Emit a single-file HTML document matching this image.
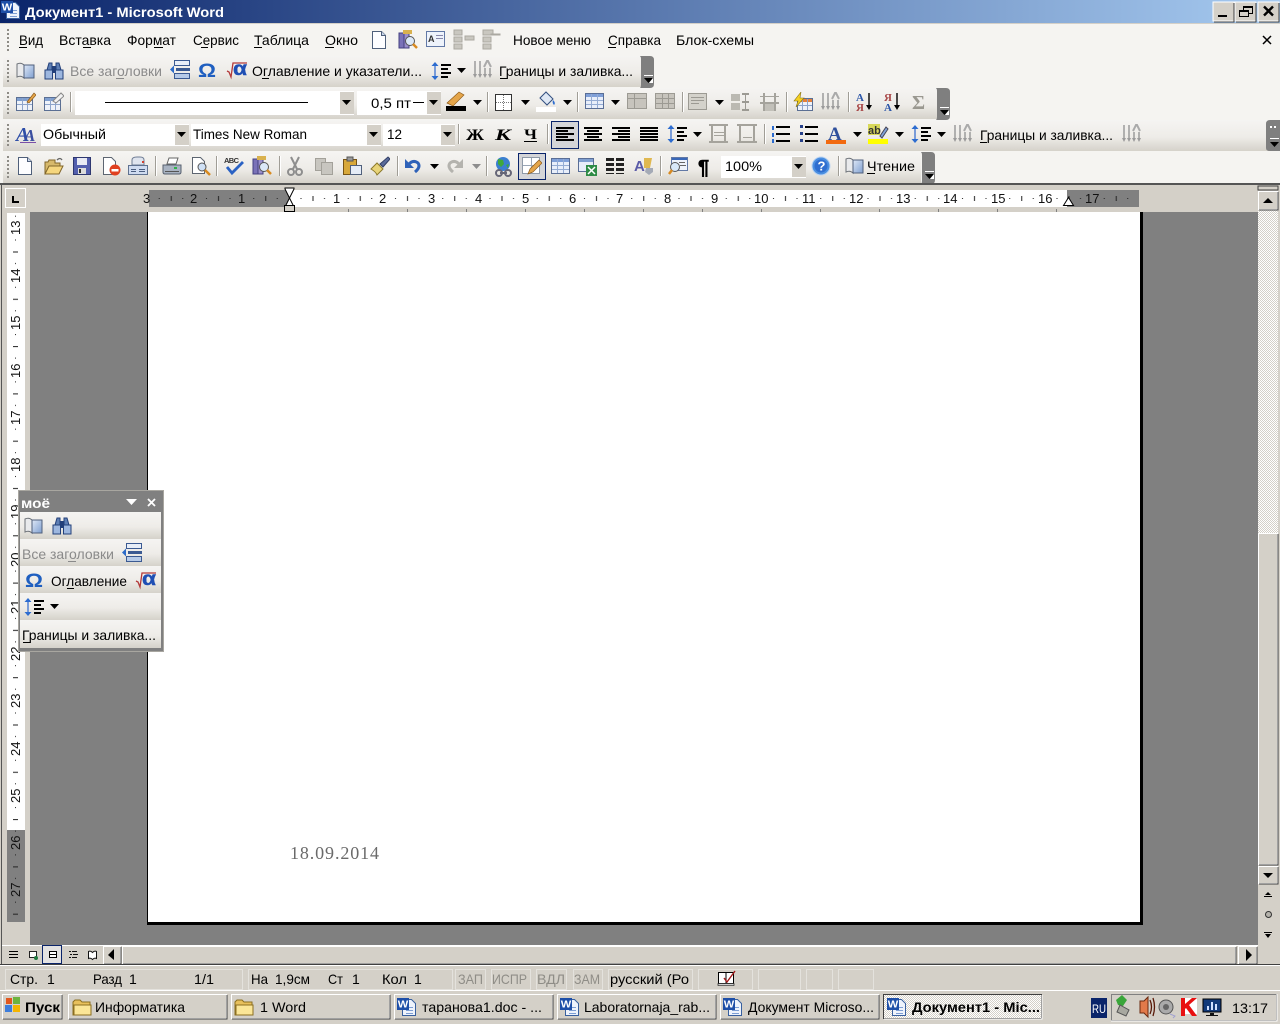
<!DOCTYPE html>
<html lang="ru"><head><meta charset="utf-8"><title>Документ1 - Microsoft Word</title>
<style>
html,body{margin:0;padding:0;background:#d4d0c8;width:1280px;height:1024px;overflow:hidden}
svg{display:block;position:absolute;left:0;top:0}
text{font-family:"Liberation Sans",sans-serif;font-size:14px;fill:#000}
.g{fill:#8a8a8a}
.b{font-weight:bold}
.r{font-size:13px;fill:#111}
rect.c,path.c{shape-rendering:crispEdges}
</style></head><body>
<svg width="1280" height="1024" viewBox="0 0 1280 1024" xmlns="http://www.w3.org/2000/svg">
<defs>
<linearGradient id="tb" x1="0" x2="1" y1="0" y2="0"><stop offset="0" stop-color="#0a246a"/><stop offset="1" stop-color="#a6caf0"/></linearGradient>
<linearGradient id="bd" x1="0" x2="0" y1="0" y2="1"><stop offset="0" stop-color="#f5f4f2"/><stop offset=".55" stop-color="#eeece8"/><stop offset="1" stop-color="#d5d2ca"/></linearGradient>
<linearGradient id="blu" x1="0" x2="1" y1="0" y2="1"><stop offset="0" stop-color="#dfe8f6"/><stop offset="1" stop-color="#7f9fd0"/></linearGradient>
<pattern id="dit" width="2" height="2" patternUnits="userSpaceOnUse"><rect width="2" height="2" fill="#fff"/><rect width="1" height="1" fill="#d4d0c8"/><rect x="1" y="1" width="1" height="1" fill="#d4d0c8"/></pattern>
<pattern id="rt" x="289" y="190" width="47.25" height="17" patternUnits="userSpaceOnUse"><rect x="11.5" y="8" width="1" height="1" fill="#222"/><rect x="23.5" y="6" width="1" height="5" fill="#222"/><rect x="35" y="8" width="1" height="1" fill="#222"/></pattern>
<pattern id="rv" x="0" y="228" width="30" height="47.3" patternUnits="userSpaceOnUse"><rect x="15" y="11.5" width="1" height="1" fill="#222"/><rect x="13" y="23.5" width="5" height="1" fill="#222"/><rect x="15" y="35" width="1" height="1" fill="#222"/></pattern>

<symbol id="dn" width="10" height="6" viewBox="0 0 10 6"><path d="M0 0h9L4.500 5z" fill="#000"/></symbol>
<symbol id="dg" width="10" height="6" viewBox="0 0 10 6"><path d="M0 0h9L4.500 5z" fill="#8d8d8d"/></symbol>
<symbol id="grip" width="4" height="24" viewBox="0 0 4 24"><path class="c" d="M1 0h2v2H1zM1 4h2v2H1zM1 8h2v2H1zM1 12h2v2H1zM1 16h2v2H1zM1 20h2v2H1z" fill="#8e8c86"/></symbol>
<symbol id="sep" width="2" height="20" viewBox="0 0 2 20"><path class="c" d="M0 0h1v20H0z" fill="#a09d96"/><path class="c" d="M1 0h1v20H1z" fill="#fff"/></symbol>
<symbol id="chev" width="15" height="32" viewBox="0 0 15 32"><path d="M0 0h10q4 0 4 4v24q0 4-4 4H0q1-1 1-3V3q0-2-1-3z" fill="#7f7f7f"/><path class="c" d="M4 19h9v1H4z" fill="#fff"/><path d="M4 22h9l-4.500 5z" fill="#000"/><path d="M9 27l4-5v5z" fill="#fff"/></symbol>
<symbol id="book" width="20" height="20" viewBox="0 0 20 20"><path d="M1 3q4-2 7 1v13q-3-3-7-1z" fill="#e9eaec" stroke="#6d7278"/><path d="M8 4h10v13H8z" fill="url(#blu)" stroke="#50607c"/></symbol>
<symbol id="bin" width="20" height="20" viewBox="0 0 20 20"><path d="M3 9l2-7h3v7M17 9l-2-7h-3v7" fill="#5e7fb5" stroke="#23407a"/><rect x="1" y="9" width="7.500" height="9" fill="#9db7df" stroke="#23407a"/><rect x="11.500" y="9" width="7.500" height="9" fill="#9db7df" stroke="#23407a"/><rect x="8" y="5" width="4" height="7" fill="#23407a"/></symbol>
<symbol id="head" width="20" height="20" viewBox="0 0 20 20"><rect x="4.500" y=".5" width="15" height="5" fill="#e8eef8" stroke="#3b5a92"/><rect x="4.500" y="13.500" width="15" height="5" fill="#b7cbe8" stroke="#3b5a92"/><path class="c" d="M6 8h14v3H6z" fill="#3b5a92"/><path d="M0 9.500l4-4v8z" fill="#2d6bc8"/></symbol>
<symbol id="sq" width="22" height="20" viewBox="0 0 22 20"><path d="M1 11l2 1 2 5 2-14h14" fill="none" stroke="#b33a3a" stroke-width="1.300"/><text x="7" y="15" style="font-size:19px;font-weight:bold;fill:#1f4fb4;stroke:#1f4fb4;stroke-width:.4" textLength="14" lengthAdjust="spacingAndGlyphs">α</text></symbol>
<symbol id="spc" width="20" height="20" viewBox="0 0 20 20"><path d="M4 1l3.500 4h-7zM4 19l3.500-4h-7z" fill="#2c6cd0"/><path d="M3 5h2v10H3z" fill="#7a9cd8"/><path class="c" d="M10 3h10v2H10zM10 7h7v2H10zM10 11h10v2H10zM10 15h7v2H10z" fill="#000"/></symbol>
<symbol id="bgr" width="20" height="20" viewBox="0 0 20 20"><path d="M2 1v14M7 1v14M12 8v7M17 8v7" stroke="#9b9b9b" stroke-width="1.500"/><path d="M0 14l2 4 2-4zM5 14l2 4 2-4zM10 14l2 4 2-4zM15 14l2 4 2-4z" fill="#9b9b9b"/><path d="M11 7l3.500-7 3.500 7" fill="none" stroke="#aaa" stroke-width="2"/></symbol>
<symbol id="tpen" width="20" height="20" viewBox="0 0 20 20"><rect x=".5" y="5.500" width="16" height="13" fill="#eef2f9" stroke="#5b6f93"/><path class="c" d="M1 6h15v3H1z" fill="#7f9fd0"/><path class="c" d="M6 6h1v12H6zM11 6h1v12h-1zM1 12h15v1H1z" fill="#8ea5cb"/><path d="M11 10L18 1l2 2-7 8z" fill="#e4a54a" stroke="#8e5b1a" stroke-width=".7"/></symbol>
<symbol id="terase" width="20" height="20" viewBox="0 0 20 20"><rect x=".5" y="5.500" width="16" height="13" fill="#eef2f9" stroke="#5b6f93"/><path class="c" d="M1 6h15v3H1z" fill="#7f9fd0"/><path class="c" d="M6 6h1v12H6zM11 6h1v12h-1zM1 12h15v1H1z" fill="#8ea5cb"/><path d="M9 9l8-8 3 3-8 7z" fill="#f2f2f2" stroke="#888"/></symbol>
<symbol id="new" width="20" height="20" viewBox="0 0 20 20"><path d="M3.500 1.500h9l4 4v13h-13z" fill="#fdfdff" stroke="#4f5f7a"/><path d="M12.500 1.500v4h4" fill="#c9d6ea" stroke="#4f5f7a"/></symbol>
<symbol id="open" width="20" height="20" viewBox="0 0 20 20"><path d="M1 18V6h3l1-2h6v3h5v3" fill="#d7b96b" stroke="#81662b"/><path d="M1 18l4-8h14l-4 8z" fill="#f5d67e" stroke="#81662b"/><path d="M13 4q3-3 5 0" fill="none" stroke="#666" stroke-width="1.300"/></symbol>
<symbol id="save" width="20" height="20" viewBox="0 0 20 20"><rect x="1.500" y="1.500" width="17" height="17" fill="#535fae" stroke="#2e3770"/><rect x="5" y="2" width="10" height="7" fill="#e8eaf4"/><rect x="6" y="12" width="8" height="6" fill="#ddd"/><rect x="7" y="13" width="2" height="4" fill="#333"/></symbol>
<symbol id="perm" width="20" height="20" viewBox="0 0 20 20"><path d="M2.500 1.500h8l4 4v13h-12z" fill="#fff" stroke="#5d6571"/><circle cx="14" cy="14" r="5.500" fill="#e04020"/><rect x="10.500" y="13" width="7" height="2.500" fill="#fff"/></symbol>
<symbol id="mail" width="20" height="20" viewBox="0 0 20 20"><path d="M4 9V4q0-3 5-3h3q4 0 4 3v5z" fill="#dfe4ee" stroke="#6e7c94"/><rect x="14" y="5" width="2" height="2" fill="#d04030"/><rect x=".5" y="9.500" width="19" height="9" fill="#cfdbf0" stroke="#5f7190"/><path class="c" d="M3 13h5v1H3zM3 15h5v1H3zM11 13h6v1h-6zM11 15h6v1h-6z" fill="#4b5e80"/></symbol>
<symbol id="print" width="20" height="20" viewBox="0 0 20 20"><path d="M5 8l2-6h9l-2 6z" fill="#fff" stroke="#666"/><path d="M1 9h18v7q0 2-2 2H3q-2 0-2-2z" fill="#a9b3c2" stroke="#57606f"/><rect x="12" y="11" width="3" height="2" fill="#2fb34a"/><path class="c" d="M3 15h14v1H3z" fill="#555"/></symbol>
<symbol id="prev" width="20" height="20" viewBox="0 0 20 20"><path d="M1.500 1.500h8l4 4v12h-12z" fill="#fff" stroke="#5d6571"/><circle cx="11" cy="11" r="4" fill="#cfe0f5" stroke="#555"/><path d="M14 14l5 5" stroke="#d88a20" stroke-width="2.500"/></symbol>
<symbol id="spell" width="20" height="20" viewBox="0 0 20 20"><text x="0" y="7" style="font-size:7.500px;font-weight:bold;fill:#333" textLength="15">ABC</text><path d="M3 11l5 6L19 6" fill="none" stroke="#2a62c4" stroke-width="2.800"/></symbol>
<symbol id="res" width="20" height="20" viewBox="0 0 20 20"><rect x="1" y="3" width="5" height="15" fill="#7a72b8" stroke="#444080"/><rect x="6" y="3" width="5" height="15" fill="#9b8fcc" stroke="#444080"/><rect x="5" y="0" width="9" height="4" fill="#d9b14e"/><circle cx="12" cy="11" r="4.500" fill="#dbe8f8" stroke="#555"/><path d="M15 14l4 4" stroke="#d88a20" stroke-width="2.500"/></symbol>
<symbol id="cut" width="20" height="20" viewBox="0 0 20 20"><path d="M6 1l6 12M14 1L8 13" stroke="#8e8e8e" stroke-width="2"/><circle cx="6" cy="16" r="3" fill="none" stroke="#8e8e8e" stroke-width="2"/><circle cx="14" cy="16" r="3" fill="none" stroke="#8e8e8e" stroke-width="2"/></symbol>
<symbol id="copy" width="20" height="20" viewBox="0 0 20 20"><rect x="1.500" y="2.500" width="10" height="12" fill="#c8c6c0" stroke="#a3a19a"/><rect x="7.500" y="6.500" width="11" height="12" fill="#c8c6c0" stroke="#a3a19a"/></symbol>
<symbol id="paste" width="20" height="20" viewBox="0 0 20 20"><rect x="1.500" y="3.500" width="13" height="15" fill="#d8a83a" stroke="#775415"/><rect x="5" y="1" width="6" height="4" fill="#999" stroke="#555"/><rect x="8.500" y="9.500" width="11" height="9" fill="#e5ecf7" stroke="#50607c"/></symbol>
<symbol id="brush" width="20" height="20" viewBox="0 0 20 20"><path d="M1 13l6-6 6 6-6 6q-1-3-6-6z" fill="#e8d47a" stroke="#8c7a2c"/><path d="M10 8l8-7 2 2-7 8z" fill="#5a6b9a" stroke="#323e66"/></symbol>
<symbol id="undo" width="18" height="20" viewBox="0 0 18 20"><path d="M4 9q5-6 10-2 3 4-3 9" fill="none" stroke="#2f62b8" stroke-width="3"/><path d="M1 3v9h9z" fill="#2f62b8"/></symbol>
<symbol id="redo" width="18" height="20" viewBox="0 0 18 20"><path d="M14 9q-5-6-10-2-3 4 3 9" fill="none" stroke="#b4b3ae" stroke-width="3"/><path d="M17 3v9H8z" fill="#b4b3ae"/></symbol>
<symbol id="glob" width="20" height="20" viewBox="0 0 20 20"><circle cx="9" cy="7" r="7" fill="#3b7fd0"/><path d="M4 2l5 1 1 4-3 3-3-3zM12 8l3-1-1 4z" fill="#3fa83c"/><path d="M2 16a3 3 0 0 1 6 0 3 3 0 0 1-6 0zM11 16a3 3 0 0 1 6 0 3 3 0 0 1-6 0z" fill="none" stroke="#667" stroke-width="2"/><path d="M6 16h7" stroke="#667" stroke-width="2"/></symbol>
<symbol id="draw" width="20" height="20" viewBox="0 0 20 20"><rect x=".5" y="1.500" width="17" height="16" fill="#fff" stroke="#8f9aa8"/><path class="c" d="M9 2h1v15H9zM1 9h16v1H1z" fill="#9aa6b6"/><path d="M6 18l2-5 9-9 3 3-9 9z" fill="#e4a54a" stroke="#8e5b1a" stroke-width=".7"/></symbol>
<symbol id="tab" width="20" height="20" viewBox="0 0 20 20"><rect x=".5" y="2.500" width="18" height="15" fill="#e8eefa" stroke="#5a6e96"/><path class="c" d="M1 3h17v3H1z" fill="#7f9fd8"/><path class="c" d="M6 3h1v14H6zM12 3h1v14h-1zM1 9h17v1H1zM1 13h17v1H1z" fill="#95acd4"/></symbol>
<symbol id="xl" width="20" height="20" viewBox="0 0 20 20"><rect x=".5" y="1.500" width="15" height="13" fill="#e8eefa" stroke="#5a6e96"/><path class="c" d="M1 2h14v3H1z" fill="#7f9fd0"/><rect x="8" y="8" width="11" height="11" fill="#2e8b46"/><path d="M10 10l7 7M17 10l-7 7" stroke="#fff" stroke-width="1.500"/></symbol>
<symbol id="col" width="20" height="20" viewBox="0 0 20 20"><path class="c" d="M1 2h8v3H1zM11 2h8v3h-8zM1 7h8v3H1zM11 7h8v3h-8zM1 12h8v3H1zM11 12h8v3h-8zM1 17h8v1H1zM11 17h8v1h-8z" fill="#222"/></symbol>
<symbol id="wa" width="20" height="20" viewBox="0 0 20 20"><path d="M10 2h8l-2 10h-6z" fill="#e0b850"/><path d="M12 12h7v4l-4 3-4-3z" fill="#a4aab6"/><text x="0" y="15" style="font-size:15px;font-weight:bold;fill:#5b5ba8">A</text></symbol>
<symbol id="map" width="20" height="20" viewBox="0 0 20 20"><rect x="3.500" y="1.500" width="16" height="13" fill="#eef3fb" stroke="#6279a6"/><path class="c" d="M4 2h15v2H4z" fill="#3a68b8"/><path class="c" d="M11 6h6v1h-6zM12 9h6v1h-6z" fill="#666"/><circle cx="7" cy="11" r="4.500" fill="#d8e8f8" stroke="#555"/><path d="M4 14l-3 4" stroke="#d88a20" stroke-width="2.500"/></symbol>
<symbol id="help" width="20" height="20" viewBox="0 0 20 20"><circle cx="10" cy="10" r="9" fill="#4b8fe0" stroke="#bcd4f2"/><circle cx="10" cy="10" r="6.500" fill="#2f6ed0"/><text x="6.500" y="14.500" style="font-size:13px;font-weight:bold;fill:#fff">?</text></symbol>
<symbol id="ggrid" width="20" height="20" viewBox="0 0 20 20"><rect x=".5" y="2.500" width="19" height="15" fill="#c7c4bd" stroke="#9c9a93"/><path class="c" d="M1 7h18v1H1zM7 3h1v14H7z" fill="#9c9a93"/></symbol>
<symbol id="ggrid2" width="20" height="20" viewBox="0 0 20 20"><rect x=".5" y="2.500" width="19" height="15" fill="#c7c4bd" stroke="#9c9a93"/><path class="c" d="M1 7h18v1H1zM1 12h18v1H1zM7 3h1v14H7zM13 3h1v14h-1z" fill="#9c9a93"/></symbol>
<symbol id="gtxt" width="20" height="20" viewBox="0 0 20 20"><rect x=".5" y="1.500" width="18" height="16" fill="#d4d2cb" stroke="#9c9a93"/><path class="c" d="M3 5h13v1H3zM3 8h13v1H3zM3 11h8v1H3z" fill="#9c9a93"/></symbol>
<symbol id="gmrg" width="20" height="20" viewBox="0 0 20 20"><path class="c" d="M0 2h9v7H0zM0 11h9v7H0z" fill="#bbb9b2"/><path class="c" d="M11 1h7v2h-7zM11 17h7v2h-7zM14 3h1v14h-1zM11 9h7v2h-7z" fill="#9c9a93"/></symbol>
<symbol id="gspl" width="20" height="20" viewBox="0 0 20 20"><path class="c" d="M3 1h2v18H3zM14 1h2v18h-2zM0 4h19v1H0zM0 10h19v2H0z" fill="#a5a39c"/><path class="c" d="M5 12h9v7H5z" fill="#c2c0b9"/></symbol>
<symbol id="wiz" width="20" height="20" viewBox="0 0 20 20"><rect x="4.500" y="6.500" width="15" height="12" fill="#eef2f9" stroke="#5b6f93"/><path class="c" d="M5 7h14v3H5z" fill="#e4803a"/><path class="c" d="M9 7h1v11H9zM14 7h1v11h-1zM5 13h14v1H5z" fill="#8ea5cb"/><path d="M8 0L1 9h4l-2 6 8-9H7z" fill="#f5d020" stroke="#8a7210" stroke-width=".6"/></symbol>
<symbol id="az" width="20" height="20" viewBox="0 0 20 20"><text x="1" y="9" style="font-size:11px;font-weight:bold;font-family:'Liberation Serif';fill:#2c56a8">A</text><text x="1" y="19" style="font-size:11px;font-weight:bold;font-family:'Liberation Serif';fill:#a84848">Я</text><path d="M14 1v15" stroke="#000" stroke-width="1.400"/><path d="M11 13l3 5 3-5z" fill="#000"/></symbol>
<symbol id="za" width="20" height="20" viewBox="0 0 20 20"><text x="1" y="9" style="font-size:11px;font-weight:bold;font-family:'Liberation Serif';fill:#a84848">Я</text><text x="1" y="19" style="font-size:11px;font-weight:bold;font-family:'Liberation Serif';fill:#2c56a8">A</text><path d="M14 1v15" stroke="#000" stroke-width="1.400"/><path d="M11 13l3 5 3-5z" fill="#000"/></symbol>
<symbol id="wd" width="20" height="20" viewBox="0 0 20 20"><path d="M5.500 2.500h9l4 4v12h-13z" fill="#eef3fc" stroke="#38609f"/><path class="c" d="M9 10h7v1H9zM9 13h7v1H9zM9 16h7v1H9z" fill="#7d9ed4"/><rect x="0" y="1" width="12" height="12" fill="#1e4fa8"/><text x=".8" y="10.500" style="font-size:10px;font-weight:bold;fill:#fff" textLength="10.500" lengthAdjust="spacingAndGlyphs">W</text></symbol>
<symbol id="fold" width="20" height="20" viewBox="0 0 20 20"><path d="M1 18V5l2-2h5l2 2h8v13z" fill="#e8c05c" stroke="#8c6f20"/><path d="M2 18V8h17v10z" fill="#fbe697" stroke="#8c6f20"/></symbol>
</defs>

<!-- base -->
<rect class="c" x="0" y="0" width="1280" height="1024" fill="#d4d0c8"/>
<rect class="c" x="0" y="0" width="1280" height="23" fill="url(#tb)"/>
<rect class="c" x="0" y="23" width="1280" height="161" fill="#f5f4f1"/>

<!-- title -->
<use href="#wd" x="1" y="0" width="20" height="20"/>
<text x="25" y="17" class="b" style="font-size:14px;fill:#fff" textLength="199" lengthAdjust="spacingAndGlyphs">Документ1 - Microsoft Word</text>
<g>
<rect class="c" x="1213" y="2" width="21" height="19" fill="#d4d0c8" stroke="#fff"/><path class="c" d="M1234 3v19h-20" fill="none" stroke="#404040"/><path class="c" d="M1218 15h9v2h-9z" fill="#000"/>
<rect class="c" x="1235" y="2" width="21" height="19" fill="#d4d0c8" stroke="#fff"/><path class="c" d="M1256 3v19h-20" fill="none" stroke="#404040"/><path class="c" d="M1243 6h10v2h-10zM1243 8h1v2h-1zM1252 8h1v6h-1zM1249 13h4v1h-4zM1239 10h10v2h-10zM1239 12h1v5h-1zM1248 12h1v5h-1zM1239 16h10v1h-10z" fill="#000"/>
<rect class="c" x="1258" y="2" width="21" height="19" fill="#d4d0c8" stroke="#fff"/><path class="c" d="M1279 3v19h-20" fill="none" stroke="#404040"/><path d="M1264 6.500l9 9M1273 6.500l-9 9" stroke="#000" stroke-width="2.400"/>
</g>

<!-- row 1 menu -->
<rect class="c" x="0" y="23" width="1280" height="1" fill="#d4d0c8"/>
<use href="#grip" x="6" y="29" width="4" height="24"/>
<text x="19" y="45" textLength="24" lengthAdjust="spacingAndGlyphs">Вид</text><path class="c" d="M19 47h8v1h-8z"/>
<text x="59" y="45" textLength="52" lengthAdjust="spacingAndGlyphs">Вставка</text><path class="c" d="M83 47h8v1h-8z"/>
<text x="127" y="45" textLength="49" lengthAdjust="spacingAndGlyphs">Формат</text><path class="c" d="M154 47h9v1h-9z"/>
<text x="193" y="45" textLength="46" lengthAdjust="spacingAndGlyphs">Сервис</text><path class="c" d="M201 47h7v1h-7z"/>
<text x="254" y="45" textLength="55" lengthAdjust="spacingAndGlyphs">Таблица</text><path class="c" d="M254 47h8v1h-8z"/>
<text x="325" y="45" textLength="33" lengthAdjust="spacingAndGlyphs">Окно</text><path class="c" d="M325 47h9v1h-9z"/>
<use href="#new" x="369" y="30" width="20" height="20"/>
<use href="#res" x="398" y="30" width="20" height="20"/>
<rect class="c" x="426.500" y="31.500" width="18" height="15" fill="#eef3fb" stroke="#6279a6"/><text x="428" y="42" style="font-size:9px;font-weight:bold;fill:#333">A</text><path class="c" d="M436 35h7v1h-7zM436 38h7v1h-7z" fill="#88a"/>
<path class="c" d="M454 30h8v5h-8zM454 37h8v5h-8zM454 44h8v5h-8zM465 36h9v4h-9z" fill="#c9c7c0" stroke="#aaa8a1"/>
<path class="c" d="M483 30h10v5h-10zM483 37h8v5h-8zM483 44h8v5h-8zM491 34h9v1h-9z" fill="#c9c7c0" stroke="#aaa8a1"/>
<text x="513" y="45" textLength="78" lengthAdjust="spacingAndGlyphs">Новое меню</text>
<text x="608" y="45" textLength="53" lengthAdjust="spacingAndGlyphs">Справка</text><path class="c" d="M608 47h8v1h-8z"/>
<text x="676" y="45" textLength="78" lengthAdjust="spacingAndGlyphs">Блок-схемы</text>
<path d="M1263 36l8 8M1271 36l-8 8" stroke="#000" stroke-width="1.500"/>

<!-- row 2 -->
<path d="M3 87V60q0-4 4-4h636v31z" fill="url(#bd)"/>
<use href="#grip" x="6" y="60" width="4" height="24"/>
<use href="#book" x="16" y="61" width="20" height="20"/>
<use href="#bin" x="44" y="61" width="20" height="20"/>
<text x="70" y="76" class="g" textLength="92" lengthAdjust="spacingAndGlyphs">Все заголовки</text><path class="c" d="M116 78h8v1h-8z" fill="#8a8a8a"/>
<use href="#head" x="170" y="60" width="20" height="20"/>
<text x="198" y="77" class="b" style="font-size:19px;fill:#1f5fc0" textLength="18" lengthAdjust="spacingAndGlyphs">Ω</text>
<use href="#sq" x="226" y="60" width="22" height="20"/>
<text x="252" y="76" textLength="170" lengthAdjust="spacingAndGlyphs">Оглавление и указатели...</text><path class="c" d="M262 78h7v1h-7z"/>
<use href="#spc" x="431" y="61" width="20" height="20"/>
<use href="#dn" x="457" y="68" width="10" height="6"/>
<use href="#bgr" x="473" y="60" width="20" height="20"/>
<text x="499" y="76" textLength="134" lengthAdjust="spacingAndGlyphs">Границы и заливка...</text><path class="c" d="M500 78h7v1h-7z"/>
<use href="#chev" x="640" y="56" width="15" height="32"/>

<!-- row 3 -->
<path d="M3 119V92q0-4 4-4h930v31z" fill="url(#bd)"/>
<use href="#grip" x="6" y="92" width="4" height="24"/>
<use href="#tpen" x="16" y="92" width="20" height="20"/>
<use href="#terase" x="44" y="92" width="20" height="20"/>
<use href="#sep" x="70" y="92" width="2" height="20"/>
<rect class="c" x="75" y="91" width="279" height="24" fill="#fff"/><rect class="c" x="340" y="92" width="14" height="22" fill="#d4d0c8"/><use href="#dn" x="342" y="100" width="10" height="6"/>
<rect class="c" x="105" y="102" width="203" height="1" fill="#000"/>
<rect class="c" x="357" y="91" width="84" height="24" fill="#fff"/><rect class="c" x="427" y="92" width="14" height="22" fill="#d4d0c8"/><use href="#dn" x="429" y="100" width="10" height="6"/>
<text x="371" y="108" textLength="40" lengthAdjust="spacingAndGlyphs">0,5 пт</text><path class="c" d="M413 102h11v1h-11z"/>
<path d="M447 103l12-11 5 3-11 11z" fill="#e4a54a" stroke="#8e5b1a" stroke-width=".7"/><rect class="c" x="446" y="106" width="20" height="5" fill="#000"/>
<use href="#dn" x="473" y="100" width="10" height="6"/>
<use href="#sep" x="487" y="92" width="2" height="20"/>
<rect class="c" x="495.500" y="94.500" width="16" height="16" fill="#fff" stroke="#333"/><path d="M503.500 95v15M496 102.500h15" stroke="#777" stroke-dasharray="1 1"/>
<use href="#dn" x="521" y="100" width="10" height="6"/>
<path d="M540 98l6-6 7 7-6 6z" fill="#dfe8f5" stroke="#334f80"/><path d="M553 100q3 3 1 5-2-2-1-5z" fill="#2c6cd0"/><rect class="c" x="536" y="107" width="20" height="5" fill="#fff"/>
<use href="#dn" x="563" y="100" width="10" height="6"/>
<use href="#sep" x="577" y="92" width="2" height="20"/>
<use href="#tab" x="585" y="91" width="20" height="20"/>
<use href="#dn" x="611" y="100" width="10" height="6"/>
<use href="#ggrid" x="627" y="91" width="20" height="20"/>
<use href="#ggrid2" x="655" y="91" width="20" height="20"/>
<use href="#sep" x="682" y="92" width="2" height="20"/>
<use href="#gtxt" x="688" y="92" width="20" height="20"/>
<use href="#dn" x="715" y="100" width="10" height="6"/>
<use href="#gmrg" x="731" y="92" width="20" height="20"/>
<use href="#gspl" x="760" y="92" width="20" height="20"/>
<use href="#sep" x="786" y="92" width="2" height="20"/>
<use href="#wiz" x="793" y="92" width="20" height="20"/>
<use href="#bgr" x="821" y="92" width="20" height="20"/>
<use href="#sep" x="848" y="92" width="2" height="20"/>
<use href="#az" x="855" y="92" width="20" height="20"/>
<use href="#za" x="883" y="92" width="20" height="20"/>
<text x="912" y="109" class="b" style="font-size:20px;fill:#9a9890;font-family:'Liberation Serif'">Σ</text>
<use href="#chev" x="936" y="88" width="15" height="32"/>

<!-- row 4 -->
<path d="M3 151V124q0-4 4-4h1268v31z" fill="url(#bd)"/>
<use href="#grip" x="6" y="124" width="4" height="24"/>
<text x="16" y="141" class="b" style="font-size:20px;font-family:'Liberation Serif';fill:#2f4fa8;font-style:italic">A</text><text x="24" y="141" class="b" style="font-size:17px;font-family:'Liberation Serif';fill:#3b4fa0;font-style:italic">A</text><path class="c" d="M20 142h16v1H20z" fill="#7a4fa8"/>
<rect class="c" x="41" y="124" width="148" height="22" fill="#fff"/><rect class="c" x="175" y="125" width="14" height="20" fill="#d4d0c8"/><use href="#dn" x="177" y="132" width="10" height="6"/>
<text x="43" y="139" textLength="63" lengthAdjust="spacingAndGlyphs">Обычный</text>
<rect class="c" x="191" y="124" width="190" height="22" fill="#fff"/><rect class="c" x="367" y="125" width="14" height="20" fill="#d4d0c8"/><use href="#dn" x="369" y="132" width="10" height="6"/>
<text x="193" y="139" textLength="114" lengthAdjust="spacingAndGlyphs">Times New Roman</text>
<rect class="c" x="383" y="124" width="72" height="22" fill="#fff"/><rect class="c" x="441" y="125" width="14" height="20" fill="#d4d0c8"/><use href="#dn" x="443" y="132" width="10" height="6"/>
<text x="387" y="139" textLength="15" lengthAdjust="spacingAndGlyphs">12</text>
<use href="#sep" x="458" y="124" width="2" height="20"/>
<text x="466" y="140" class="b" style="font-size:16px;font-family:'Liberation Serif'" textLength="18" lengthAdjust="spacingAndGlyphs">Ж</text>
<text x="495" y="140" class="b" style="font-size:16px;font-family:'Liberation Serif';font-style:italic" textLength="16" lengthAdjust="spacingAndGlyphs">К</text>
<text x="524" y="139" class="b" style="font-size:15px;font-family:'Liberation Serif'" textLength="13" lengthAdjust="spacingAndGlyphs">Ч</text><path class="c" d="M524 141h13v1h-13z"/>
<use href="#sep" x="547" y="124" width="2" height="20"/>
<rect class="c" x="551.500" y="121.500" width="27" height="27" fill="#d4d5d8" stroke="#0a246a"/>
<path class="c" d="M556 127h18v2h-18zM556 130h12v2h-12zM556 133h18v2h-18zM556 136h12v2h-12zM556 139h18v2h-18z" fill="#000"/>
<path class="c" d="M584 127h18v2h-18zM587 130h12v2h-12zM584 133h18v2h-18zM587 136h12v2h-12zM584 139h18v2h-18z" fill="#000"/>
<path class="c" d="M612 127h18v2h-18zM618 130h12v2h-12zM612 133h18v2h-18zM618 136h12v2h-12zM612 139h18v2h-18z" fill="#000"/>
<path class="c" d="M640 127h18v2h-18zM640 130h18v2h-18zM640 133h18v2h-18zM640 136h18v2h-18zM640 139h18v2h-18z" fill="#000"/>
<use href="#spc" x="667" y="124" width="20" height="20"/>
<use href="#dn" x="693" y="132" width="10" height="6"/>
<path class="c" d="M709 124h19v2h-19zM709 141h19v2h-19zM711 126h2v15h-2zM724 126h2v15h-2zM714 132h10v1h-10zM714 135h10v1h-10z" fill="#a5a39c"/>
<path class="c" d="M737 124h20v2h-20zM737 141h20v2h-20zM739 126h2v15h-2zM753 126h2v15h-2zM743 137h9v1h-9z" fill="#a5a39c"/>
<use href="#sep" x="764" y="124" width="2" height="20"/>
<path class="c" d="M776 126h14v2h-14zM776 133h14v2h-14zM776 140h14v2h-14z" fill="#000"/><path class="c" d="M772 126h2v4h-2zM772 133h2v4h-2zM772 139h2v4h-2z" fill="#2c6cd0"/>
<path class="c" d="M805 126h13v2h-13zM805 133h13v2h-13zM805 140h13v2h-13z" fill="#000"/><path class="c" d="M800 125h3v3h-3zM800 132h3v3h-3zM800 139h3v3h-3z" fill="#26408a"/>
<text x="828" y="140" class="b" style="font-size:19px;font-family:'Liberation Serif';fill:#2f4f9c">A</text><rect class="c" x="826" y="140" width="20" height="4" fill="#f26a10"/>
<use href="#dn" x="853" y="132" width="10" height="6"/>
<rect class="c" x="868" y="124" width="12" height="11" fill="#d8d85a"/><text x="868" y="134" class="b" style="font-size:11px;fill:#333">ab</text><path d="M880 136l6-9 2 2-6 9z" fill="#7fa0d8" stroke="#445"/><rect class="c" x="868" y="139" width="20" height="5" fill="#ffff00"/>
<use href="#dn" x="895" y="132" width="10" height="6"/>
<use href="#spc" x="911" y="124" width="20" height="20"/>
<use href="#dn" x="937" y="132" width="10" height="6"/>
<use href="#bgr" x="953" y="124" width="20" height="20"/>
<text x="980" y="140" textLength="133" lengthAdjust="spacingAndGlyphs">Границы и заливка...</text><path class="c" d="M980 142h7v1h-7z"/>
<use href="#bgr" x="1122" y="124" width="20" height="20"/>
<path d="M1280 120h-10q-4 0-4 4v24q0 3 4 3h10z" fill="#7f7f7f"/><path class="c" d="M1270 126h2v2h-2zM1274 126h2v2h-2zM1270 138h9v1h-9z" fill="#fff"/><path d="M1270 142h9l-4.500 5z" fill="#000"/>

<!-- row 5 -->
<path d="M3 183V156q0-4 4-4h914v31z" fill="url(#bd)"/>
<use href="#grip" x="6" y="156" width="4" height="24"/>
<use href="#new" x="15" y="156" width="20" height="20"/>
<use href="#open" x="44" y="156" width="20" height="20"/>
<use href="#save" x="72" y="156" width="20" height="20"/>
<use href="#perm" x="101" y="156" width="20" height="20"/>
<use href="#mail" x="128" y="156" width="20" height="20"/>
<use href="#sep" x="155" y="156" width="2" height="20"/>
<use href="#print" x="162" y="156" width="20" height="20"/>
<use href="#prev" x="191" y="156" width="20" height="20"/>
<use href="#sep" x="216" y="156" width="2" height="20"/>
<use href="#spell" x="224" y="156" width="20" height="20"/>
<use href="#res" x="252" y="156" width="20" height="20"/>
<use href="#sep" x="279" y="156" width="2" height="20"/>
<use href="#cut" x="285" y="156" width="20" height="20"/>
<use href="#copy" x="314" y="156" width="20" height="20"/>
<use href="#paste" x="342" y="156" width="20" height="20"/>
<use href="#brush" x="370" y="156" width="20" height="20"/>
<use href="#sep" x="397" y="156" width="2" height="20"/>
<use href="#undo" x="404" y="156" width="18" height="20"/>
<use href="#dn" x="430" y="164" width="10" height="6"/>
<use href="#redo" x="446" y="156" width="18" height="20"/>
<use href="#dg" x="472" y="164" width="10" height="6"/>
<use href="#sep" x="486" y="156" width="2" height="20"/>
<use href="#glob" x="494" y="157" width="20" height="20"/>
<rect class="c" x="518.500" y="153.500" width="27" height="26" fill="#d4d5d8" stroke="#0a246a"/>
<use href="#draw" x="522" y="156" width="20" height="20"/>
<use href="#tab" x="551" y="156" width="20" height="20"/>
<use href="#xl" x="578" y="157" width="20" height="20"/>
<use href="#col" x="605" y="156" width="20" height="20"/>
<use href="#wa" x="634" y="156" width="20" height="20"/>
<use href="#sep" x="660" y="156" width="2" height="20"/>
<use href="#map" x="668" y="156" width="20" height="20"/>
<text x="698" y="174" class="b" style="font-size:20px;stroke:#000;stroke-width:.6">¶</text>
<rect class="c" x="721" y="156" width="85" height="22" fill="#fff"/><rect class="c" x="792" y="157" width="14" height="20" fill="#d4d0c8"/><use href="#dn" x="794" y="164" width="10" height="6"/>
<text x="725" y="171" textLength="37" lengthAdjust="spacingAndGlyphs">100%</text>
<use href="#help" x="811" y="156" width="20" height="20"/>
<use href="#sep" x="838" y="156" width="2" height="20"/>
<use href="#book" x="845" y="156" width="20" height="20"/>
<text x="867" y="171" textLength="48" lengthAdjust="spacingAndGlyphs">Чтение</text><path class="c" d="M867 173h8v1h-8z"/>
<use href="#chev" x="921" y="152" width="15" height="32"/>

<!-- ruler strip -->
<rect class="c" x="0" y="183" width="1280" height="2" fill="#555"/>
<rect class="c" x="0" y="185" width="1280" height="27" fill="#d4d0c8"/>
<rect class="c" x="1" y="184" width="1" height="780" fill="#555"/>
<rect class="c" x="5.500" y="188.500" width="20" height="19" fill="#d4d0c8" stroke="#fff"/>
<path class="c" d="M12 196h2v5h5v2h-7z" fill="#000"/>
<rect class="c" x="149" y="190" width="140" height="17" fill="#808080"/>
<rect class="c" x="289" y="190" width="778" height="17" fill="#fff"/>
<rect class="c" x="1067" y="190" width="72" height="17" fill="#808080"/>
<rect class="c" x="149" y="190" width="990" height="17" fill="url(#rt)"/>
<g>
<text class="r" x="143" y="203">3</text><text class="r" x="190" y="203">2</text><text class="r" x="238" y="203">1</text>
<text class="r" x="333" y="203">1</text><text class="r" x="379" y="203">2</text><text class="r" x="428" y="203">3</text><text class="r" x="475" y="203">4</text><text class="r" x="522" y="203">5</text><text class="r" x="569" y="203">6</text><text class="r" x="616" y="203">7</text><text class="r" x="664" y="203">8</text><text class="r" x="711" y="203">9</text>
<text class="r" x="754" y="203">10</text><text class="r" x="802" y="203">11</text><text class="r" x="849" y="203">12</text><text class="r" x="896" y="203">13</text><text class="r" x="943" y="203">14</text><text class="r" x="991" y="203">15</text><text class="r" x="1038" y="203">16</text><text class="r" x="1085" y="203">17</text>
</g>
<path class="c" d="M348 209h1v3h-1zM407 209h1v3h-1zM466 209h1v3h-1zM525 209h1v3h-1zM584 209h1v3h-1zM643 209h1v3h-1zM702 209h1v3h-1zM761 209h1v3h-1zM820 209h1v3h-1zM879 209h1v3h-1zM938 209h1v3h-1zM997 209h1v3h-1zM1056 209h1v3h-1z" fill="#808080"/>
<path d="M285 188h9v1l-4.500 9-4.500-9zM285 207l4.500-9 4.500 9z" fill="#fff" stroke="#000"/><rect class="c" x="284.500" y="205.500" width="10" height="6" fill="#d4d0c8" stroke="#000"/>
<path d="M1063.500 205.500l5-8 5 8z" fill="#fff" stroke="#000"/>

<!-- workspace -->
<rect class="c" x="30" y="212" width="1228" height="733" fill="#808080"/>
<rect class="c" x="147" y="212" width="996" height="713" fill="#000"/>
<rect class="c" x="148" y="212" width="992" height="710" fill="#fff"/>
<text x="290" y="859" style="font-family:'Liberation Serif',serif;font-size:18px;fill:#6a6a6a" textLength="89">18.09.2014</text>

<!-- vertical ruler -->
<rect class="c" x="7" y="213" width="18" height="617" fill="#fff"/>
<rect class="c" x="7" y="830" width="18" height="92" fill="#808080"/>
<rect class="c" x="7" y="213" width="18" height="709" fill="url(#rv)"/>
<g>
<text class="r" transform="translate(20 235) rotate(-90)">13</text><text class="r" transform="translate(20 283) rotate(-90)">14</text><text class="r" transform="translate(20 330) rotate(-90)">15</text><text class="r" transform="translate(20 378) rotate(-90)">16</text><text class="r" transform="translate(20 425) rotate(-90)">17</text><text class="r" transform="translate(20 472) rotate(-90)">18</text><text class="r" transform="translate(20 519) rotate(-90)">19</text><text class="r" transform="translate(20 567) rotate(-90)">20</text><text class="r" transform="translate(20 614) rotate(-90)">21</text><text class="r" transform="translate(20 661) rotate(-90)">22</text><text class="r" transform="translate(20 708) rotate(-90)">23</text><text class="r" transform="translate(20 756) rotate(-90)">24</text><text class="r" transform="translate(20 803) rotate(-90)">25</text><text class="r" transform="translate(20 850) rotate(-90)">26</text><text class="r" transform="translate(20 897) rotate(-90)">27</text>
</g>

<!-- vertical scrollbar -->
<rect class="c" x="1258" y="185" width="22" height="760" fill="#d4d0c8"/>
<rect class="c" x="1258" y="210" width="20" height="323" fill="url(#dit)"/>
<rect class="c" x="1258" y="186" width="20" height="4" fill="#d4d0c8" stroke="#404040" stroke-width="1"/>
<rect class="c" x="1258.500" y="191.500" width="19" height="18" fill="#d4d0c8" stroke="#fff"/><path class="c" d="M1278 192v18h-19" fill="none" stroke="#404040"/><path d="M1263 203l5-5 5 5z" fill="#000"/>
<rect class="c" x="1258.500" y="533.500" width="19" height="331" fill="#d4d0c8" stroke="#fff"/><path class="c" d="M1278 534v331h-19" fill="none" stroke="#404040"/>
<rect class="c" x="1258.500" y="866.500" width="19" height="17" fill="#d4d0c8" stroke="#fff"/><path class="c" d="M1278 867v17h-19" fill="none" stroke="#404040"/><path d="M1263 873h10l-5 5z" fill="#000"/>
<path d="M1268 892l-3 3h6zM1264 896h8v1h-8z" fill="#000"/>
<circle cx="1268.500" cy="914.500" r="3" fill="#b5b2ab" stroke="#333"/>
<path d="M1264 932h8v1h-8zM1268 938l-3-4h6z" fill="#000"/>

<!-- horizontal scrollbar row -->
<rect class="c" x="2" y="945" width="1256" height="1" fill="#fff"/>
<rect class="c" x="2" y="946" width="1256" height="18" fill="#d4d0c8"/>
<path class="c" d="M9 951h9v1H9zM9 954h9v1H9zM9 957h9v1H9z" fill="#000"/>
<rect class="c" x="29.500" y="951.500" width="7" height="6" fill="#fff" stroke="#222"/><circle cx="36" cy="958" r="2" fill="#207a40"/>
<rect class="c" x="42.500" y="945.500" width="19" height="18" fill="#e3e2e2" stroke="#0a246a"/><rect class="c" x="49.500" y="951.500" width="7" height="6" fill="#fff" stroke="#000"/><path class="c" d="M50 954h6v1h-6z"/>
<path class="c" d="M69 951h2v1h-2zM72 951h5v1h-5zM70 954h2v1h-2zM73 954h5v1h-5zM69 957h2v1h-2zM72 957h5v1h-5z" fill="#111"/>
<path d="M88.500 951.500q2-1 4 1 2-2 4-1v7q-2-1-4 1-2-2-4-1z" fill="#fff" stroke="#111"/>
<rect class="c" x="103.500" y="946.500" width="17" height="17" fill="#d4d0c8" stroke="#fff"/><path class="c" d="M121 947v17h-17" fill="none" stroke="#404040"/><path d="M108 955l6-6v11z" fill="#000"/>
<rect class="c" x="122.500" y="946.500" width="1113" height="17" fill="#d4d0c8" stroke="#fff"/><path class="c" d="M1236 947v17H123" fill="none" stroke="#404040"/>
<rect class="c" x="1238.500" y="946.500" width="18" height="17" fill="#d4d0c8" stroke="#fff"/><path class="c" d="M1257 947v17h-18" fill="none" stroke="#404040"/><path d="M1246 949l6 6-6 6z" fill="#000"/>

<!-- status bar -->
<rect class="c" x="0" y="964" width="1280" height="1" fill="#404040"/>
<rect class="c" x="0" y="965" width="1280" height="1" fill="#fff"/>
<g fill="none" stroke="#e4e2dd">
<rect class="c" x="5.500" y="969.500" width="237" height="20"/><rect class="c" x="248.500" y="969.500" width="204" height="20"/><rect class="c" x="455.500" y="969.500" width="30" height="20"/><rect class="c" x="491.500" y="969.500" width="39" height="20"/><rect class="c" x="536.500" y="969.500" width="30" height="20"/><rect class="c" x="573.500" y="969.500" width="29" height="20"/><rect class="c" x="608.500" y="969.500" width="84" height="20"/><rect class="c" x="698.500" y="969.500" width="54" height="20"/><rect class="c" x="758.500" y="969.500" width="42" height="20"/><rect class="c" x="806.500" y="969.500" width="26" height="20"/><rect class="c" x="838.500" y="969.500" width="35" height="20"/>
</g>
<text x="10" y="984" textLength="28" lengthAdjust="spacingAndGlyphs">Стр.</text><text x="47" y="984" textLength="7">1</text>
<text x="93" y="984" textLength="29" lengthAdjust="spacingAndGlyphs">Разд</text><text x="129" y="984" textLength="7">1</text>
<text x="194" y="984" textLength="20" lengthAdjust="spacingAndGlyphs">1/1</text>
<text x="251" y="984" textLength="17" lengthAdjust="spacingAndGlyphs">На</text><text x="275" y="984" textLength="35" lengthAdjust="spacingAndGlyphs">1,9см</text>
<text x="328" y="984" textLength="15" lengthAdjust="spacingAndGlyphs">Ст</text><text x="352" y="984" textLength="7">1</text>
<text x="382" y="984" textLength="25" lengthAdjust="spacingAndGlyphs">Кол</text><text x="414" y="984" textLength="7">1</text>
<text x="458" y="984" class="g" textLength="25" lengthAdjust="spacingAndGlyphs" style="fill:#8f8d87">ЗАП</text>
<text x="492" y="984" class="g" textLength="35" lengthAdjust="spacingAndGlyphs" style="fill:#8f8d87">ИСПР</text>
<text x="537" y="984" class="g" textLength="28" lengthAdjust="spacingAndGlyphs" style="fill:#8f8d87">ВДЛ</text>
<text x="574" y="984" class="g" textLength="26" lengthAdjust="spacingAndGlyphs" style="fill:#8f8d87">ЗАМ</text>
<text x="610" y="984" textLength="79" lengthAdjust="spacingAndGlyphs">русский (Ро</text>
<path d="M718.500 972.500h7.500v11h-7.500zM726 972.500h7.500v11H726z" fill="#fff" stroke="#000"/><path d="M718 983.500h16v2h-16z" fill="#ccc" stroke="#000" stroke-width=".6"/><path d="M724 978l3 4 8-11" fill="none" stroke="#a01818" stroke-width="1.400"/>

<!-- taskbar -->
<rect class="c" x="0" y="990" width="1280" height="1" fill="#fff"/>
<rect class="c" x="0" y="991" width="1280" height="33" fill="#d4d0c8"/>
<g fill="#d4d0c8" stroke="#fff">
<rect class="c" x="2.500" y="994.500" width="59" height="24"/><rect class="c" x="68.500" y="994.500" width="158" height="24"/><rect class="c" x="231.500" y="994.500" width="158" height="24"/><rect class="c" x="394.500" y="994.500" width="158" height="24"/><rect class="c" x="557.500" y="994.500" width="158" height="24"/><rect class="c" x="720.500" y="994.500" width="158" height="24"/>
</g>
<path class="c" d="M62 995v24H3M227 995v24H69M390 995v24H232M553 995v24H395M716 995v24H558M879 995v24H721" fill="none" stroke="#404040"/>
<rect class="c" x="883.500" y="994.500" width="158" height="24" fill="url(#dit)" stroke="#404040"/><path class="c" d="M1042 995v24H884" fill="none" stroke="#fff"/>
<path class="c" d="M6 998h6v6H6z" fill="#e2571e"/><path class="c" d="M13 997h7v7h-7z" fill="#6db33f"/><path class="c" d="M5 1005h7v7H5z" fill="#3d7ddb"/><path class="c" d="M13 1005h7v7h-7z" fill="#f4b400"/>
<text x="25" y="1012" class="b" style="font-size:14px" textLength="35" lengthAdjust="spacingAndGlyphs">Пуск</text>
<use href="#fold" x="72" y="997" width="20" height="20"/><text x="95" y="1012" textLength="90" lengthAdjust="spacingAndGlyphs">Информатика</text>
<use href="#fold" x="234" y="997" width="20" height="20"/><text x="260" y="1012" textLength="46" lengthAdjust="spacingAndGlyphs">1 Word</text>
<use href="#wd" x="397" y="997" width="20" height="20"/><text x="422" y="1012" textLength="120" lengthAdjust="spacingAndGlyphs">таранова1.doc - ...</text>
<use href="#wd" x="560" y="997" width="20" height="20"/><text x="584" y="1012" textLength="126" lengthAdjust="spacingAndGlyphs">Laboratornaja_rab...</text>
<use href="#wd" x="723" y="997" width="20" height="20"/><text x="748" y="1012" textLength="126" lengthAdjust="spacingAndGlyphs">Документ Microso...</text>
<use href="#wd" x="887" y="997" width="20" height="20"/><text x="912" y="1012" class="b" style="font-size:14px" textLength="128" lengthAdjust="spacingAndGlyphs">Документ1 - Mic...</text>
<rect class="c" x="1091" y="998" width="16" height="20" fill="#0a246a"/><text x="1092" y="1013" style="fill:#fff;font-size:12px" textLength="14" lengthAdjust="spacingAndGlyphs">RU</text>
<rect class="c" x="1111.500" y="994.500" width="165" height="26" fill="#d4d0c8" stroke="#808080"/><path class="c" d="M1277 994v27h-166" fill="none" stroke="#fff"/>
<path d="M1116 1000l6-5 5 5-4 6-5-1z" fill="#3aa63a"/><path d="M1120 1005l9 5-3 6-9-4z" fill="#a8a8a0" stroke="#555"/>
<path d="M1140 1001h4l4-4v20l-4-4h-4z" fill="#e27a4a" stroke="#6a2a10"/><path d="M1150 1000q3 7 0 14M1153 998q3 9 0 18" fill="none" stroke="#5a1a08" stroke-width="1.300"/>
<circle cx="1166" cy="1007" r="7" fill="#aaa" stroke="#555"/><circle cx="1166" cy="1007" r="3" fill="#666"/><path d="M1170 1014l5 2-2 2" fill="none" stroke="#a0a0d0"/>
<rect class="c" x="1181" y="998" width="16" height="16" fill="#fff"/><path d="M1181 998h4v6l7-6h5l-8 7 8 11h-5l-6-8-1 1v7h-4z" fill="#e81010"/>
<rect class="c" x="1203" y="999" width="18" height="13" fill="#123a7a" stroke="#000"/><path class="c" d="M1207 1010h2v-4h-2zM1211 1010h2v-8h-2zM1215 1010h2v-6h-2z" fill="#cfe0ff"/><path class="c" d="M1210 1013h4v2h-4zM1206 1015h12v1h-12z" fill="#111"/>
<text x="1232" y="1013" textLength="36" lengthAdjust="spacingAndGlyphs">13:17</text>

<!-- floating toolbar -->
<rect class="c" x="18" y="490" width="146" height="162" fill="#808080"/>
<rect class="c" x="18.500" y="490.500" width="145" height="161" fill="none" stroke="#a8a6a0"/>
<rect class="c" x="20" y="512" width="141" height="27" fill="url(#bd)"/>
<rect class="c" x="20" y="539" width="141" height="27" fill="url(#bd)"/>
<rect class="c" x="20" y="566" width="141" height="27" fill="url(#bd)"/>
<rect class="c" x="20" y="593" width="141" height="27" fill="url(#bd)"/>
<rect class="c" x="20" y="620" width="141" height="28" fill="url(#bd)"/>
<text x="21" y="508" class="b" style="fill:#fff;font-size:14px" textLength="29" lengthAdjust="spacingAndGlyphs">моё</text>
<path d="M126 499h11l-5.500 6z" fill="#fff"/>
<path d="M148 499l7 7M155 499l-7 7" stroke="#fff" stroke-width="1.800"/>
<use href="#book" x="24" y="516" width="20" height="20"/>
<use href="#bin" x="52" y="516" width="20" height="20"/>
<text x="22" y="559" class="g" textLength="92" lengthAdjust="spacingAndGlyphs">Все заголовки</text><path class="c" d="M68 561h8v1h-8z" fill="#8a8a8a"/>
<use href="#head" x="122" y="543" width="20" height="20"/>
<text x="25" y="587" class="b" style="font-size:19px;fill:#1f5fc0" textLength="18" lengthAdjust="spacingAndGlyphs">Ω</text>
<text x="51" y="586" textLength="76" lengthAdjust="spacingAndGlyphs">Оглавление</text><path class="c" d="M67 588h7v1h-7z"/>
<use href="#sq" x="135" y="570" width="22" height="20"/>
<use href="#spc" x="24" y="597" width="20" height="20"/>
<use href="#dn" x="50" y="604" width="10" height="6"/>
<text x="22" y="640" textLength="134" lengthAdjust="spacingAndGlyphs">Границы и заливка...</text><path class="c" d="M23 642h7v1h-7z"/>
</svg>
</body></html>
